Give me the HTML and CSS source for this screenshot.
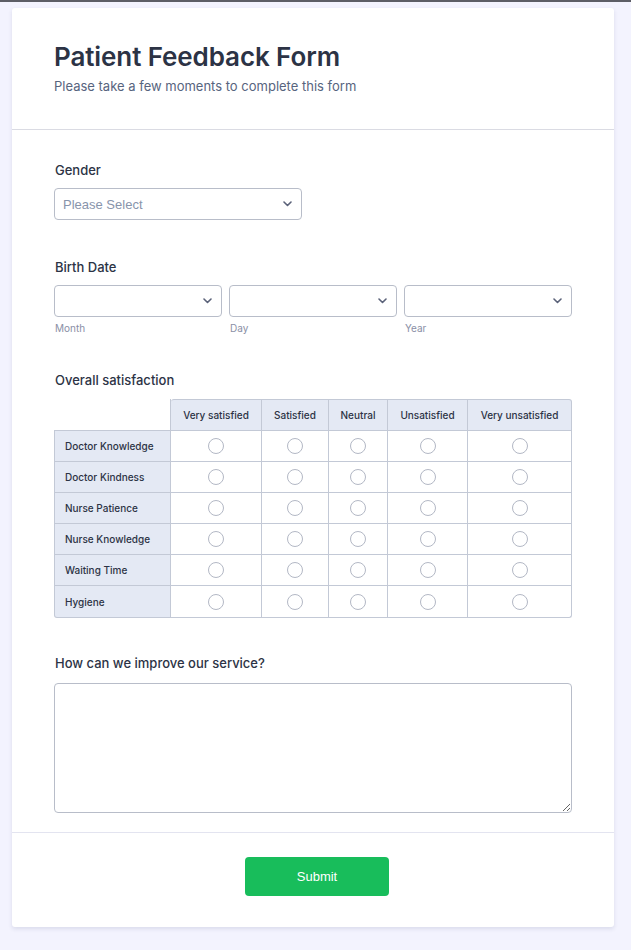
FILE: index.html
```html
<!DOCTYPE html>
<html lang="en">
<head>
<meta charset="utf-8">
<title>Patient Feedback Form</title>
<link rel="stylesheet" href="styles.css">
</head>
<body>
<div class="page">
  <form class="card">
    <header class="card-header">
      <h1 class="title">Patient Feedback Form</h1>
      <p class="subtitle">Please take a few moments to complete this form</p>
    </header>

    <div class="card-body">
      <div class="field">
        <label class="label">Gender</label>
        <div class="select select-gender">
          <span class="placeholder">Please Select</span>
          <svg class="chev" width="9" height="6" viewBox="0 0 9 6"><path d="M1 1l3.5 3.5L8 1" fill="none" stroke="#5b6279" stroke-width="1.6" stroke-linecap="round" stroke-linejoin="round"/></svg>
        </div>
      </div>

      <div class="field">
        <label class="label">Birth Date</label>
        <div class="date-row">
          <div class="date-col">
            <div class="select"><span class="placeholder"></span><svg class="chev" width="9" height="6" viewBox="0 0 9 6"><path d="M1 1l3.5 3.5L8 1" fill="none" stroke="#5b6279" stroke-width="1.6" stroke-linecap="round" stroke-linejoin="round"/></svg></div>
            <span class="sublabel">Month</span>
          </div>
          <div class="date-col">
            <div class="select"><span class="placeholder"></span><svg class="chev" width="9" height="6" viewBox="0 0 9 6"><path d="M1 1l3.5 3.5L8 1" fill="none" stroke="#5b6279" stroke-width="1.6" stroke-linecap="round" stroke-linejoin="round"/></svg></div>
            <span class="sublabel">Day</span>
          </div>
          <div class="date-col">
            <div class="select"><span class="placeholder"></span><svg class="chev" width="9" height="6" viewBox="0 0 9 6"><path d="M1 1l3.5 3.5L8 1" fill="none" stroke="#5b6279" stroke-width="1.6" stroke-linecap="round" stroke-linejoin="round"/></svg></div>
            <span class="sublabel">Year</span>
          </div>
        </div>
      </div>

      <div class="field">
        <label class="label">Overall satisfaction</label>
        <table class="matrix">
          <colgroup>
            <col class="c-label"><col class="c1"><col class="c2"><col class="c3"><col class="c4"><col class="c5">
          </colgroup>
          <thead>
            <tr>
              <th class="blank"></th>
              <th class="first">Very satisfied</th>
              <th>Satisfied</th>
              <th>Neutral</th>
              <th>Unsatisfied</th>
              <th class="last">Very unsatisfied</th>
            </tr>
          </thead>
          <tbody>
            <tr><th class="row-label top">Doctor Knowledge</th><td><span class="radio"></span></td><td><span class="radio"></span></td><td><span class="radio"></span></td><td><span class="radio"></span></td><td><span class="radio"></span></td></tr>
            <tr><th class="row-label">Doctor Kindness</th><td><span class="radio"></span></td><td><span class="radio"></span></td><td><span class="radio"></span></td><td><span class="radio"></span></td><td><span class="radio"></span></td></tr>
            <tr><th class="row-label">Nurse Patience</th><td><span class="radio"></span></td><td><span class="radio"></span></td><td><span class="radio"></span></td><td><span class="radio"></span></td><td><span class="radio"></span></td></tr>
            <tr><th class="row-label">Nurse Knowledge</th><td><span class="radio"></span></td><td><span class="radio"></span></td><td><span class="radio"></span></td><td><span class="radio"></span></td><td><span class="radio"></span></td></tr>
            <tr><th class="row-label">Waiting Time</th><td><span class="radio"></span></td><td><span class="radio"></span></td><td><span class="radio"></span></td><td><span class="radio"></span></td><td><span class="radio"></span></td></tr>
            <tr class="last-row"><th class="row-label">Hygiene</th><td><span class="radio"></span></td><td><span class="radio"></span></td><td><span class="radio"></span></td><td><span class="radio"></span></td><td class="br"><span class="radio"></span></td></tr>
          </tbody>
        </table>
      </div>

      <div class="field field-last">
        <label class="label">How can we improve our service?</label>
        <textarea class="textarea"></textarea>
      </div>
    </div>

    <footer class="card-footer">
      <button type="button" class="submit">Submit</button>
    </footer>
  </form>
</div>
</body>
</html>
```

FILE: styles.css
```css
* { box-sizing: border-box; }

html, body {
  margin: 0;
  padding: 0;
  background: #f3f3fe;
}

body {
  font-family: Inter, "Liberation Sans", sans-serif;
  color: #2c3345;
}

.page {
  border-top: 2px solid #5d5e66;
  padding: 6px 17px 23px 12px;
  min-height: 950px;
}

.card {
  width: 602px;
  background: #fff;
  border-radius: 3px;
  box-shadow: 0 2px 4px rgba(42, 53, 99, 0.12);
}

.card-header {
  padding: 33px 42px 34px;
  border-bottom: 1px solid #dadbe3;
}

.title {
  margin: 0;
  font-size: 26px;
  line-height: 31px;
  font-weight: 600;
  color: #2c3345;
  letter-spacing: -0.1px;
}

.subtitle {
  margin: 5px 0 0;
  font-size: 13px;
  line-height: 18px;
  color: #57647e;
}

.card-body {
  padding: 31px 42px 19px;
}

.field {
  margin-bottom: 38px;
}
.field-last { margin-bottom: 0; }

.label {
  display: block;
  margin: 0 0 9px 1px;
  font-size: 13px;
  line-height: 18px;
  font-weight: 500;
  color: #2c3345;
}

.select {
  height: 32px;
  border: 1px solid #b8bdc9;
  border-radius: 4px;
  background: #fff;
  display: flex;
  align-items: center;
  justify-content: space-between;
  padding: 0 9px 0 8px;
}
.select-gender { width: 248px; }

.placeholder {
  font-family: "Liberation Sans", Arial, sans-serif;
  font-size: 13px;
  color: #8894ab;
}

.chev { display: block; }

.date-row {
  display: flex;
  gap: 7px;
}
.date-col {
  width: 168px;
  display: flex;
  flex-direction: column;
}
.sublabel {
  margin-top: 4px;
  font-size: 10px;
  line-height: 14px;
  color: #8a8fa6;
  padding-left: 1px;
}

.field:nth-child(2) { margin-bottom: 36px; }
.field:nth-child(3) { margin-bottom: 36px; }
.field:nth-child(3) .label { margin-bottom: 10px; }
.field-last .label { margin-bottom: 11px; }

/* matrix */
.matrix {
  width: 518px;
  border-collapse: separate;
  border-spacing: 0;
  table-layout: fixed;
  font-size: 10px;
  color: #2c3345;
}
.c-label { width: 117px; }
.c1 { width: 91px; }
.c2 { width: 67px; }
.c3 { width: 59px; }
.c4 { width: 80px; }
.c5 { width: 104px; }

.matrix th,
.matrix td {
  height: 31px;
  padding: 0;
  border-right: 1px solid #c3c9d6;
  border-bottom: 1px solid #c3c9d6;
  text-align: center;
  vertical-align: middle;
}
.matrix thead th {
  background: #e4e9f4;
  font-weight: 500;
  border-top: 1px solid #c3c9d6;
  height: 32px;
}
.matrix thead th.blank {
  background: transparent;
  border-top: none;
  border-right: 1px solid #c3c9d6;
  border-bottom: 1px solid #c3c9d6;
}
.matrix thead th.first { border-top-left-radius: 3px; }
.matrix thead th.last { border-top-right-radius: 3px; }

.matrix .row-label {
  background: #e4e9f4;
  border-left: 1px solid #c3c9d6;
  text-align: left;
  padding-left: 10px;
  font-weight: 500;
}
.matrix .last-row th,
.matrix .last-row td { height: 32px; }
.matrix .last-row .row-label { border-bottom-left-radius: 3px; }
.matrix .last-row .br { border-bottom-right-radius: 3px; }

.radio {
  display: inline-block;
  width: 16px;
  height: 16px;
  border: 1px solid #b3b8c5;
  border-radius: 50%;
  vertical-align: middle;
  background: #fff;
}

.textarea {
  display: block;
  width: 518px;
  height: 130px;
  border: 1px solid #b8bdc9;
  border-radius: 4px;
  resize: vertical;
  font-family: "Liberation Sans", sans-serif;
  margin: 0;
}

.card-footer {
  border-top: 1px solid #e3e4f0;
  padding: 24px 0 31px 8px;
  display: flex;
  justify-content: center;
}

.submit {
  width: 144px;
  height: 39px;
  border: none;
  border-radius: 4px;
  background: #18bd5b;
  color: #fff;
  font-family: "Liberation Sans", Arial, sans-serif;
  font-size: 13px;
  padding: 0;
}
```
